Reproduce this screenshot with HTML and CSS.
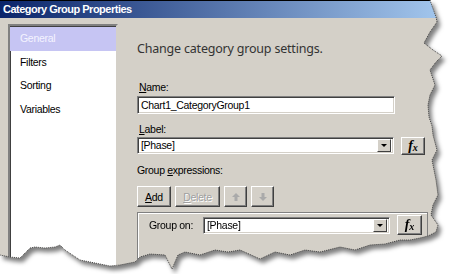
FILE: index.html
```html
<!DOCTYPE html>
<html lang="en">
<head>
  <meta charset="UTF-8">
  <title>Category Group Properties</title>
  <link rel="stylesheet" href="styles.css">
</head>
<body>
<div class="sheet">
  <div class="dialog">
    <div class="titlebar">Category Group Properties</div>
    <div class="dialog-body">
      <!-- Elenco pagine a sinistra -->
      <ul class="pages">
        <li class="page selected">General</li>
        <li class="page">Filters</li>
        <li class="page">Sorting</li>
        <li class="page">Variables</li>
      </ul>

      <!-- Impostazioni della pagina General -->
      <div class="settings">
        <p class="intro">Change category group settings.</p>

        <div class="field-label"><u>N</u>ame:</div>
        <div class="textbox name-box">Chart1_CategoryGroup1</div>

        <div class="field-label label-gap"><u>L</u>abel:</div>
        <div class="field-row">
          <div class="combo label-combo"><span class="combo-text">[Phase]</span><span class="combo-arrow"></span></div>
          <div class="fx-button"><i>f</i><i class="x">x</i></div>
        </div>

        <div class="field-label expr-label">Group <u>e</u>xpressions:</div>
        <div class="toolbar">
          <div class="button add"><u>A</u>dd</div>
          <div class="button delete disabled"><u>D</u>elete</div>
          <div class="button arrow">
            <svg width="8" height="8" viewBox="0 0 8 8"><polygon points="4,0 8,4 5.5,4 5.5,8 2.5,8 2.5,4 0,4" fill="#aaa"/></svg>
          </div>
          <div class="button arrow">
            <svg width="8" height="8" viewBox="0 0 8 8"><polygon points="4,8 8,4 5.5,4 5.5,0 2.5,0 2.5,4 0,4" fill="#aaa"/></svg>
          </div>
        </div>

        <div class="group-box">
          <div class="group-row">
            <span class="group-label">Group on:</span>
            <div class="combo group-combo"><span class="combo-text">[Phase]</span><span class="combo-arrow"></span></div>
            <div class="fx-button big"><i>f</i><i class="x">x</i></div>
          </div>
        </div>
      </div>
    </div>
  </div>

  <!-- Bordo strappato tratteggiato -->
  <svg class="torn-edge" width="450" height="274" viewBox="0 0 450 274">
    <polyline fill="none" stroke="#444" stroke-width="1" stroke-dasharray="1 1"
      points="430,0 432,6 436,17 437,22 430,32 424,43 433,50 442,56 436,62 430,70 432,76 435,85 430,95 428,105 429,117 432,126 433,135 437,150 432,160 434,170 436,180 438,195 433,205 431,215 438,225 436,232 428,236 420,238 410,240 400,240 385,244 370,245 355,250 340,247 320,252 305,250 290,255 275,252 260,259 240,250 228,252 215,250 200,255 185,252 178,255 172,269 165,255 150,254 140,257 135,262 120,265 110,266 100,264 80,260 65,250 60,245 55,247 45,248 35,247 30,248 25,253 20,258 10,257 0,255"/>
  </svg>
</div>
</body>
</html>
```

FILE: styles.css
```css
body {
  margin: 0;
  background: #fff;
  font-family: "Liberation Sans", Arial, sans-serif;
  font-size: 10.5px;
  letter-spacing: -0.3px;
  color: #000;
}
.sheet {
  position: relative;
  width: 450px;
  height: 274px;
  filter: drop-shadow(3px 4px 2px rgba(0, 0, 0, 0.5));
}
/* Finestra di dialogo con bordo strappato */
.dialog {
  height: 274px;
  background: #d4d0c8;
  display: flex;
  flex-direction: column;
  clip-path: polygon(0 0, 430px 0, 432px 6px, 436px 17px, 437px 22px, 430px 32px, 424px 43px, 433px 50px, 442px 56px, 436px 62px, 430px 70px, 432px 76px, 435px 85px, 430px 95px, 428px 105px, 429px 117px, 432px 126px, 433px 135px, 437px 150px, 432px 160px, 434px 170px, 436px 180px, 438px 195px, 433px 205px, 431px 215px, 438px 225px, 436px 232px, 428px 236px, 420px 238px, 410px 240px, 400px 240px, 385px 244px, 370px 245px, 355px 250px, 340px 247px, 320px 252px, 305px 250px, 290px 255px, 275px 252px, 260px 259px, 240px 250px, 228px 252px, 215px 250px, 200px 255px, 185px 252px, 178px 255px, 172px 269px, 165px 255px, 150px 254px, 140px 257px, 135px 262px, 120px 265px, 110px 266px, 100px 264px, 80px 260px, 65px 250px, 60px 245px, 55px 247px, 45px 248px, 35px 247px, 30px 248px, 25px 253px, 20px 258px, 10px 257px, 0 255px);
}
.torn-edge {
  position: absolute;
  top: 0;
  left: 0;
}
.titlebar {
  height: 17px;
  border-top: 1px solid #000;
  background: linear-gradient(to right, #0a246a, #a6caf0);
  color: #fff;
  font-size: 11px;
  font-weight: bold;
  letter-spacing: -0.5px;
  line-height: 17px;
  padding-left: 3px;
}
.dialog-body {
  flex: 1;
  display: flex;
  padding: 6px 0 0 8px;
}
/* Elenco pagine */
.pages {
  width: 106px;
  margin: 0;
  padding: 1px 0 0;
  list-style: none;
  background: #fff;
  border: 2px solid;
  border-color: #808080 #d4d0c8 #d4d0c8 #808080;
  box-shadow: inset 1px 1px #404040;
}
.page {
  height: 23.5px;
  line-height: 23.5px;
  padding-left: 10px;
}
.page.selected {
  background: #c6c5f3;
  color: #f4f4ff;
}
.settings {
  margin-left: 19px;
  width: 291px;
  display: flex;
  flex-direction: column;
}
.intro {
  margin: 18px 0 0;
  font-family: "Noto Sans", "Open Sans", sans-serif;
  font-size: 12.5px;
  letter-spacing: -0.2px;
  line-height: 14px;
  color: #333;
}
.field-label {
  margin-top: 25px;
  line-height: 13px;
  padding-left: 2px;
}
.label-gap {
  margin-top: 9px;
}
.expr-label {
  margin-top: 9px;
  padding-left: 0;
}
/* Campi di testo e combo */
.textbox,
.combo {
  box-sizing: border-box;
  background: #fff;
  border: 1px solid;
  border-color: #808080 #fff #fff #808080;
  box-shadow: inset 1px 1px #404040, inset -1px -1px #d4d0c8;
  display: flex;
  align-items: center;
}
.textbox {
  margin-top: 2px;
  width: 258px;
  height: 18px;
  padding-left: 3px;
}
.field-row {
  margin-top: 1px;
  display: flex;
  align-items: flex-start;
  gap: 7px;
}
.combo {
  height: 17px;
  justify-content: space-between;
  padding: 1px 2px 1px 3px;
}
.label-combo {
  width: 257px;
}
.combo-text {
  line-height: 13px;
}
.combo-arrow {
  width: 14px;
  height: 13px;
  box-sizing: border-box;
  background: #d4d0c8;
  border: 1px solid;
  border-color: #fff #404040 #404040 #fff;
  position: relative;
}
.combo-arrow::after {
  content: "";
  position: absolute;
  left: 3px;
  top: 4px;
  border-left: 3px solid transparent;
  border-right: 3px solid transparent;
  border-top: 3px solid #000;
}
/* Pulsanti in stile classico */
.button,
.fx-button {
  box-sizing: border-box;
  background: #d4d0c8;
  border: 1px solid;
  border-color: #fff #404040 #404040 #fff;
  box-shadow: inset -1px -1px #808080;
  display: flex;
  align-items: center;
  justify-content: center;
}
.fx-button {
  width: 24px;
  height: 18px;
  font-family: "Liberation Serif", serif;
  font-weight: bold;
  font-size: 14px;
  letter-spacing: 0;
}
.fx-button .x {
  font-size: 10px;
  margin-top: 3px;
}
.fx-button.big {
  width: 25px;
  height: 20px;
  margin-left: 7px;
}
.toolbar {
  margin-top: 9px;
  display: flex;
  gap: 4px;
}
.button {
  height: 21px;
}
.add {
  width: 34px;
}
.delete {
  width: 45px;
}
.disabled {
  color: #a0a0a0;
  text-shadow: 1px 1px #fff;
}
.arrow {
  width: 23px;
}
/* Riquadro espressioni di raggruppamento */
.group-box {
  flex: 1;
  margin-top: 5px;
  border: 1px solid #808080;
  border-bottom: none;
  box-shadow: inset 1px 1px #fff;
  padding: 2px 0 0 11px;
}
.group-row {
  display: flex;
  align-items: center;
}
.group-label {
  width: 54px;
}
.group-combo {
  width: 187px;
}
```
